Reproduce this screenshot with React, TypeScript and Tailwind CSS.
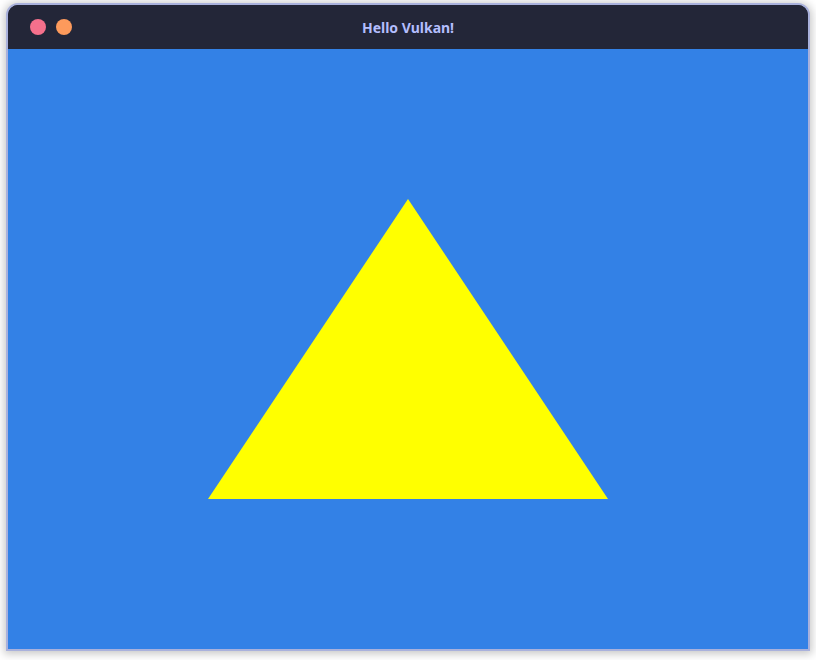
import React from "react";

export default function App() {
  return (
    <div className="w-[816px] h-[660px] bg-white overflow-hidden">
      <div className="ml-[6px] mt-[3px] w-[804px] rounded-t-[12px] border-2 border-[#a9b1dc] bg-[#232638] overflow-hidden shadow-[0_1px_8px_2px_rgba(0,0,0,0.22)]">
        <div className="h-[44px] relative flex items-center justify-center bg-[#232638]">
          <div className="absolute left-[22px] top-[14px] flex gap-[10px]">
            <div className="w-[16px] h-[16px] rounded-full bg-[#f5708c]" />
            <div className="w-[16px] h-[16px] rounded-full bg-[#fd9a5c]" />
          </div>
          <span
            className="text-[14px] font-bold text-[#b4befe]"
            style={{ fontFamily: '"Noto Sans", sans-serif' }}
          >
            Hello Vulkan!
          </span>
        </div>
        <div className="w-[800px] h-[600px] bg-[#3381e6]">
          <svg width="800" height="600" viewBox="0 0 800 600">
            <polygon points="400,150 600,450 200,450" fill="#ffff00" />
          </svg>
        </div>
      </div>
    </div>
  );
}
